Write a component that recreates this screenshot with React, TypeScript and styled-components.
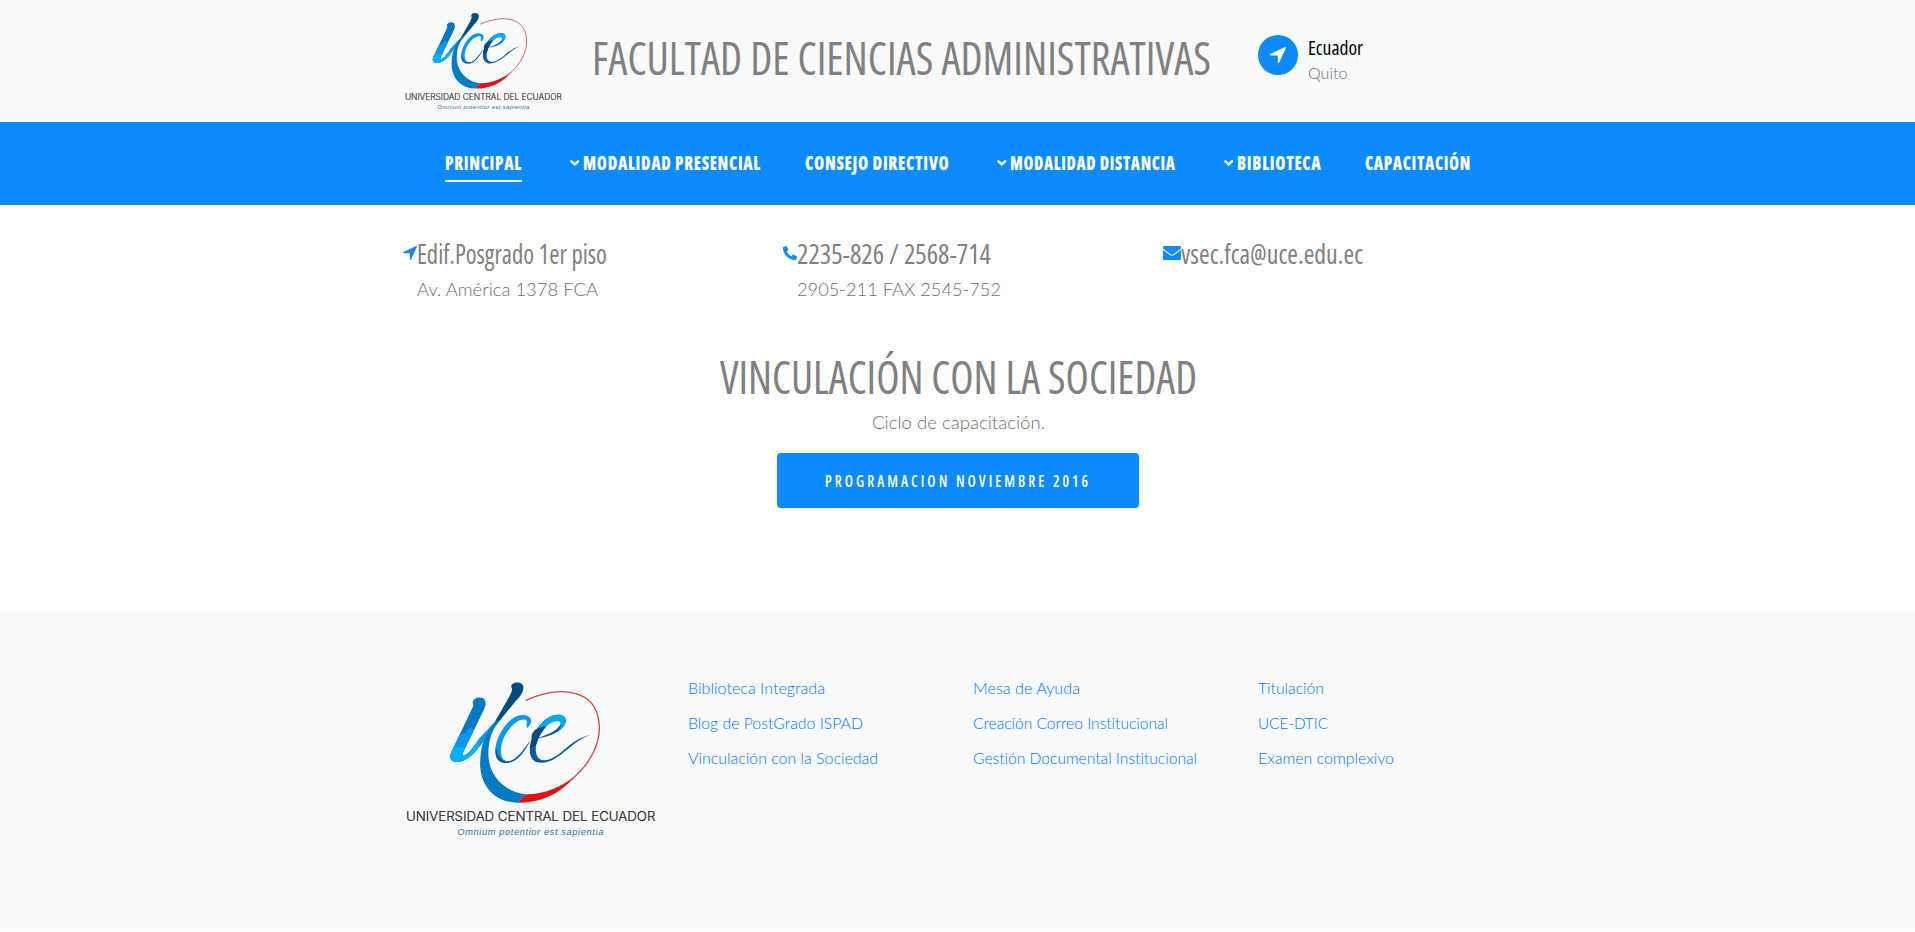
import React, { useLayoutEffect, useRef, useState } from 'react';
import styled, { createGlobalStyle } from 'styled-components';

const BLUE = '#0d8bfc';
const GRAY = '#808080';
const PALE = '#f8fafc';
const condensed = `font-family: 'Open Sans', 'Liberation Sans', sans-serif; font-stretch: 75%; color: ${GRAY};`;

const GlobalStyle = createGlobalStyle`
  * { box-sizing: border-box; }
  body { margin: 0; background: #fff; color: #6e6e6e; font-family: Lato, 'Liberation Sans', sans-serif; font-weight: 300; font-variant-ligatures: none; overflow: hidden; }
  h1, h2, h3, p, ul { margin: 0; padding: 0; list-style: none; font-weight: inherit; }
  a { text-decoration: none; }
`;

const FitBox = styled.span<{ $width: number }>`
  display: block;
  flex: none;
  width: ${p => p.$width}px;
  white-space: nowrap;
`;
const FitInner = styled.span`
  display: inline-block;
  vertical-align: top;
  transform-origin: 0 0;
`;

/* Sets one line of text to an exact measure by narrowing or widening its letters. */
function Fit({ width, children }: { width: number; children: string }) {
  const ref = useRef<HTMLSpanElement>(null);
  const [scale, setScale] = useState(1);
  useLayoutEffect(() => {
    if (ref.current && ref.current.offsetWidth) {
      setScale(width / parseFloat(getComputedStyle(ref.current).width));
    }
  }, [width, children]);
  return (
    <FitBox $width={width}>
      <FitInner ref={ref} style={{ transform: `scaleX(${scale})` }}>{children}</FitInner>
    </FitBox>
  );
}

const Container = styled.div`
  width: 1140px;
  margin: 0 auto;
  padding: 0 15px;
`;

const Header = styled.header`
  height: 122px;
  background: ${PALE};
`;
const HeaderRow = styled(Container)`
  display: flex;
  align-items: flex-start;
`;
const HeaderLogo = styled.a`
  flex: none;
  width: 189px;
  padding-top: 5px;
  svg { display: block; }
`;
const Title = styled.h1`
  ${condensed}
  width: 666px;
  padding-top: 27px;
  font-size: 46px;
  font-weight: 520;
  line-height: 60px;
`;
const Place = styled.div`
  display: flex;
  gap: 10px;
  padding-top: 35px;
`;
const RoundIcon = styled.span`
  display: flex;
  align-items: center;
  justify-content: center;
  width: 40px;
  height: 40px;
  border-radius: 50%;
  background: ${BLUE};
  color: #fff;
`;
const Country = styled.h3`
  ${condensed}
  margin-top: 1px;
  font-size: 20px;
  font-weight: 500;
  line-height: 24px;
  color: #000;
`;
const City = styled.p`
  margin-top: 1px;
  font-size: 16px;
  line-height: 24px;
`;

const Nav = styled.nav`
  height: 83px;
  background: ${BLUE};
`;
const NavList = styled.ul`
  display: flex;
  gap: 44px;
  width: 1026px;
  margin: 0 auto;
  padding-top: 29px;
`;
const NavItem = styled.li<{ $active?: boolean; $menu?: boolean }>`
  ${condensed}
  display: flex;
  gap: 3.5px;
  padding: 0 0 5px ${p => (p.$menu ? 4 : 0)}px;
  border-bottom: 2px solid ${p => (p.$active ? '#fff' : 'transparent')};
  color: #fff;
  font-size: 19.5px;
  font-weight: 800;
  letter-spacing: 0.8px;
  line-height: 24px;
  svg { flex: none; margin-top: 8px; }
`;

const Contacts = styled(Container)`
  display: grid;
  grid-template-columns: repeat(3, 380px);
  height: 141px;
  padding-top: 31px;
`;
const Contact = styled.div`
  display: flex;
  align-items: flex-start;
  svg { flex: none; margin-top: 10px; color: ${BLUE}; }
`;
const ContactTitle = styled.h3`
  ${condensed}
  font-size: 26.5px;
  font-weight: 500;
  line-height: 36px;
`;
const ContactText = styled.p`
  margin-top: 3px;
  font-size: 18px;
  line-height: 28px;
`;

const Intro = styled.section`
  display: flex;
  flex-direction: column;
  align-items: center;
  height: 266px;
  padding-left: 1px;
`;
const Heading = styled.h2`
  ${condensed}
  font-size: 46px;
  font-weight: 520;
  line-height: 60px;
`;
const Lead = styled.p`
  margin-top: 2px;
  font-size: 18px;
  line-height: 28px;
`;
const Button = styled.a`
  ${condensed}
  display: flex;
  align-items: center;
  width: 362px;
  height: 55px;
  margin-top: 17px;
  padding-left: 48px;
  border-radius: 4px;
  background: ${BLUE};
  color: #fff;
  font-size: 16.5px;
  font-weight: 600;
  letter-spacing: 3.4px;
  line-height: 22px;
`;

const Footer = styled.footer`
  height: 317px;
  padding-top: 58px;
  background: ${PALE};
`;
const FooterGrid = styled(Container)`
  display: grid;
  grid-template-columns: repeat(4, 285px);
`;
const FooterLinks = styled.ul`
  && { padding-top: 1px; }
`;
const FooterLink = styled.li`
  color: #0078ff;
  font-size: 15.5px;
  line-height: 35px;
`;

const Crest = ({ width, height }: { width: number; height: number }) => (
  <svg width={width} height={height} viewBox="24 0 786 540" fill="none">
    <path d="M233 99C232 83 261 77 269 89C275 101 270 113 262 129L219 217C207 241 197 259 207 257C220 254 240 225 252 207L298 158L316 149C290 181 268 211 249 235C229 261 207 277 184 276C160 274 164 256 173 238L231 116C235 108 236 104 233 99Z" fill="#0079c4" />
    <path d="M193 195C204 196 215 187 224 173L238 178L219 217C207 241 197 259 207 257C220 254 240 225 252 207L298 158L316 149C290 181 268 211 249 235C229 261 207 277 184 276C160 274 164 256 173 238Z" fill="#0898f2" />
    <path d="M178 228C192 236 204 232 211 231C202 249 199 259 207 257C223 253 237 230 250 211L252 231C230 260 207 277 184 276C160 274 164 256 173 238Z" fill="#00b3f7" />
    <path d="M349 51C346 36 382 31 385 50C387 66 374 81 360 96L316 149L298 158L344 78C350 66 353 59 349 51Z" fill="#004a7f" />
    <path d="M298 158L318 148C290 177 281 209 280 250C279 313 327 369 398 373C384 378 377 386 371 398C299 400 249 344 256 266C258 222 274 185 298 158Z" fill="#007bc4" />
    <path d="M398 373C451 372 499 350 542 318C498 368 442 399 371 398C377 386 384 378 398 373Z" fill="#e20f14" />
    <path d="M523 333C582 289 620 220 612 157C602 61 502 43 392 91" stroke="#d34747" strokeWidth="4" />
    <path d="M397 174C390 164 402 153 391 149C363 142 321 194 318 235C316 257 323 274 341 274C367 270 387 236 408 209C386 247 366 280 330 279C300 276 294 240 310 202C329 158 362 129 392 136C417 143 409 165 397 174Z" fill="#0898f2" />
    <path d="M303 230C307 255 317 276 341 274C367 270 387 236 408 209C386 247 366 280 330 279C306 277 297 256 303 230Z" fill="#14588b" />
    <path d="M405 207C440 204 499 180 497 156C493 137 462 155 445 178C426 204 415 239 428 261C443 283 480 265 510 237C535 216 557 200 587 195C560 202 540 220 514 241C485 266 456 283 427 277C394 266 401 218 424 179C443 148 473 130 499 135C524 144 511 171 488 185C464 199 435 206 405 207Z" fill="#075d9c" />
    <path d="M427 176C446 147 474 130 499 135C524 144 511 171 488 185C498 173 500 160 494 155C480 149 459 162 447 174Z" fill="#00a9f4" />
    <path d="M410 207C407 188 420 172 455 168C443 181 430 202 423 226L404 234Z" fill="#004a7f" />
    <text x="33" y="453" textLength="748" lengthAdjust="spacingAndGlyphs" fontFamily="Inter, sans-serif" fontSize="40" fontWeight="300" fill="#222" stroke="#222" strokeWidth=".7">UNIVERSIDAD CENTRAL DEL ECUADOR</text>
    <text x="187" y="494" textLength="438" lengthAdjust="spacing" fontFamily="'Liberation Sans', sans-serif" fontSize="28" fontStyle="italic" fontWeight="400" fill="#316c9d">Omnium potentior est sapientia</text>
  </svg>
);

const Arrow = ({ size }: { size: number }) => (
  <svg width={size} height={size} viewBox="0 0 16 16"><path d="M15.7.2C16 .4 16 .7 15.9 1L9.2 15.4C8.9 16.1 7.8 16 7.8 15.1V8.4H.8C-.1 8.4-.3 7.2.5 6.8L15.1.1C15.3 0 15.5 0 15.7.2Z" fill="currentColor" /></svg>
);
const Chevron = () => (
  <svg width="9.5" height="8" viewBox="0 0 9.5 8" fill="none"><path d="M1.4 2.3L4.75 5.4L8.1 2.3" stroke="#fff" strokeWidth="2.4" strokeLinecap="round" /></svg>
);
const Phone = () => (
  <svg width="14" height="14" viewBox="0 0 14 14"><path d="M.5.9L3.2.1Q3.8 0 4 .5L5.2 3.4Q5.4 3.9 5 4.3L3.6 5.5Q5 8.6 8.3 10.3L9.7 8.8Q10 8.5 10.5 8.7L13.5 10Q14 10.3 13.9 10.8L13.2 13.4Q13 14 12.4 14C5.5 14 0 8.4 0 1.5Q0 1 .5.9Z" fill="currentColor" /></svg>
);
const Mail = () => (
  <svg width="18" height="14" viewBox="0 0 18 14" fill="currentColor"><path d="M1 0H17Q18 0 18 1V2.6L10.4 8.2Q9 9.3 7.6 8.2L0 2.6V1Q0 0 1 0Z" /><path d="M0 4L6.9 9.1Q9 10.6 11.1 9.1L18 4V13Q18 14 17 14H1Q0 14 0 13Z" /></svg>
);

const menu = [
  { label: 'PRINCIPAL', width: 77, active: true },
  { label: 'MODALIDAD PRESENCIAL', width: 178, sub: true },
  { label: 'CONSEJO DIRECTIVO', width: 144.5 },
  { label: 'MODALIDAD DISTANCIA', width: 165.5, sub: true },
  { label: 'BIBLIOTECA', width: 84.5, sub: true },
  { label: 'CAPACITACIÓN', width: 106 },
];

const links: [string, number][][] = [
  [['Biblioteca Integrada', 137], ['Blog de PostGrado ISPAD', 175], ['Vinculación con la Sociedad', 190]],
  [['Mesa de Ayuda', 107], ['Creación Correo Institucional', 195], ['Gestión Documental Institucional', 224]],
  [['Titulación', 66], ['UCE-DTIC', 70], ['Examen complexivo', 136]],
];

export default function App() {
  return (
    <>
      <GlobalStyle />
      <Header>
        <HeaderRow>
          <HeaderLogo><Crest width={165} height={113.4} /></HeaderLogo>
          <Title><Fit width={619}>FACULTAD DE CIENCIAS ADMINISTRATIVAS</Fit></Title>
          <Place>
            <RoundIcon><Arrow size={16} /></RoundIcon>
            <div>
              <Country><Fit width={55}>Ecuador</Fit></Country>
              <City><Fit width={39.5}>Quito</Fit></City>
            </div>
          </Place>
        </HeaderRow>
      </Header>
      <Nav>
        <NavList>
          {menu.map(m => (
            <NavItem key={m.label} $active={m.active} $menu={m.sub}>
              {m.sub && <Chevron />}
              <Fit width={m.width}>{m.label}</Fit>
            </NavItem>
          ))}
        </NavList>
      </Nav>
      <main>
        <Contacts>
          <Contact>
            <Arrow size={14} />
            <div>
              <ContactTitle><Fit width={190}>Edif.Posgrado 1er piso</Fit></ContactTitle>
              <ContactText><Fit width={181}>Av. América 1378 FCA</Fit></ContactText>
            </div>
          </Contact>
          <Contact>
            <Phone />
            <div>
              <ContactTitle><Fit width={194}>2235-826 / 2568-714</Fit></ContactTitle>
              <ContactText><Fit width={204}>2905-211 FAX 2545-752</Fit></ContactText>
            </div>
          </Contact>
          <Contact>
            <Mail />
            <ContactTitle><Fit width={182}>vsec.fca@uce.edu.ec</Fit></ContactTitle>
          </Contact>
        </Contacts>
        <Intro>
          <Heading><Fit width={477}>VINCULACIÓN CON LA SOCIEDAD</Fit></Heading>
          <Lead><Fit width={173}>Ciclo de capacitación.</Fit></Lead>
          <Button><Fit width={266}>PROGRAMACION NOVIEMBRE 2016</Fit></Button>
        </Intro>
      </main>
      <Footer>
        <FooterGrid>
          <Crest width={262} height={180} />
          {links.map((col, i) => (
            <FooterLinks key={i}>
              {col.map(([label, width]) => (
                <FooterLink key={label}><a><Fit width={width}>{label}</Fit></a></FooterLink>
              ))}
            </FooterLinks>
          ))}
        </FooterGrid>
      </Footer>
    </>
  );
}
